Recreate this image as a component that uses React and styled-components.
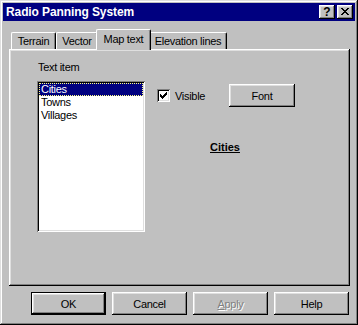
import React from 'react';
import styled, { createGlobalStyle } from 'styled-components';

const Global = createGlobalStyle`
  html, body { margin: 0; padding: 0; background: #c0c0c0; }
  body { font-family: "Liberation Sans", Arial, sans-serif; font-size: 11px; color: #000; letter-spacing: -0.3px; }
  * { box-sizing: border-box; }
`;

const Window = styled.div`
  width: 358px;
  height: 325px;
  padding: 3px;
  background: #c0c0c0;
  box-shadow: inset -1px -1px #000, inset 1px 1px #dfdfdf, inset -2px -2px #808080, inset 2px 2px #fff;
  display: flex;
  flex-direction: column;
`;

const TitleBar = styled.div`
  height: 18px;
  background: #000080;
  color: #fff;
  display: flex;
  align-items: center;
  padding: 0 2px 0 3px;
  gap: 2px;
`;

const Title = styled.div`
  flex: 1;
  font-weight: bold;
  font-size: 12px;
  letter-spacing: -0.1px;
`;

const TitleButton = styled.div`
  width: 16px;
  height: 14px;
  background: #c0c0c0;
  box-shadow: inset -1px -1px #000, inset 1px 1px #fff, inset -2px -2px #808080, inset 2px 2px #dfdfdf;
  color: #000;
  display: flex;
  align-items: center;
  justify-content: center;
  font-weight: bold;
  font-size: 12px;
  line-height: 1;
  padding-bottom: 1px;
  letter-spacing: 0;
`;

const Body = styled.div`
  padding: 8px 0 0 6px;
  display: flex;
  flex-direction: column;
`;

const TabRow = styled.div`
  display: flex;
  align-items: flex-end;
  height: 20px;
  margin-left: 2px;
  position: relative;
  z-index: 1;
`;

const Tab = styled.div`
  width: ${p => p.$w}px;
  height: ${p => (p.$active ? 21 : 17)}px;
  margin: 0 ${p => (p.$active ? -2 : 0)}px ${p => (p.$active ? -1 : 0)}px;
  padding-bottom: ${p => (p.$active ? 2 : 0)}px;
  background: #c0c0c0;
  border-top: 1px solid #fff;
  border-left: 1px solid #fff;
  border-right: 1px solid #000;
  border-radius: 2px 2px 0 0;
  box-shadow: inset -1px 0 #808080;
  display: flex;
  align-items: center;
  justify-content: center;
  white-space: nowrap;
  position: relative;
  z-index: ${p => (p.$active ? 2 : 0)};
`;

const Panel = styled.div`
  width: 341px;
  height: 237px;
  background: #c0c0c0;
  box-shadow: inset -1px -1px #000, inset 1px 1px #fff, inset -2px -2px #808080, inset 2px 2px #dfdfdf;
  padding: 12px 0 0 28px;
  display: flex;
  gap: 12px;
`;

const LeftCol = styled.div`
  display: flex;
  flex-direction: column;
`;

const Label = styled.div`
  line-height: 13px;
  padding-left: 1px;
  margin-bottom: 7px;
`;

const ListBox = styled.div`
  width: 108px;
  height: 151px;
  background: #fff;
  box-shadow: inset 1px 1px #808080, inset -1px -1px #fff, inset 2px 2px #000, inset -2px -2px #dfdfdf;
  padding: 2px;
`;

const ListItem = styled.div`
  height: 13px;
  line-height: 13px;
  padding-left: 2px;
  background: ${p => (p.$selected ? '#000080' : 'transparent')};
  color: ${p => (p.$selected ? '#fff' : '#000')};
  outline: ${p => (p.$selected ? '1px dotted #ffff80' : 'none')};
  outline-offset: -1px;
`;

const RightCol = styled.div`
  display: flex;
  flex-direction: column;
  padding-top: 23px;
`;

const OptionRow = styled.div`
  display: flex;
  align-items: center;
  height: 23px;
`;

const CheckLabel = styled.label`
  width: 72px;
  display: flex;
  align-items: center;
  gap: 5px;
`;

const CheckBox = styled.span`
  width: 13px;
  height: 13px;
  background: #fff;
  box-shadow: inset 1px 1px #808080, inset -1px -1px #fff, inset 2px 2px #000, inset -2px -2px #dfdfdf;
  display: flex;
  align-items: center;
  justify-content: center;
`;

const Button = styled.button`
  width: ${p => p.$w || 75}px;
  height: 23px;
  padding: 0;
  margin: 0;
  font: inherit;
  font-size: 11px;
  letter-spacing: -0.3px;
  color: ${p => (p.disabled ? '#808080' : '#000')};
  text-shadow: ${p => (p.disabled ? '1px 1px #fff' : 'none')};
  background: #c0c0c0;
  border: ${p => (p.$default ? '1px solid #000' : 'none')};
  box-shadow: inset -1px -1px #000, inset 1px 1px #fff, inset -2px -2px #808080, inset 2px 2px #dfdfdf;
  display: flex;
  align-items: center;
  justify-content: center;
`;

const Preview = styled.div`
  margin: 34px 0 0 53px;
  font-weight: bold;
  text-decoration: underline;
  line-height: 13px;
  letter-spacing: 0;
`;

const ButtonRow = styled.div`
  display: flex;
  gap: 6px;
  margin-top: 6px;
  padding-left: 22px;
`;

const Check = () => (
  <svg width="7" height="7" viewBox="0 0 7 7" shapeRendering="crispEdges">
    <path d="M6 0h1v3h-1v1h-1v1h-1v1h-1v1h-1v-1h-1v-1h-1v-3h1v1h1v1h1v-1h1v-1h1z" fill="#000" />
  </svg>
);

const CloseGlyph = () => (
  <svg width="8" height="7" viewBox="0 0 8 7" shapeRendering="crispEdges">
    <path d="M0 0h2v1h1v1h2v-1h1v-1h2v1h-1v1h-1v1h-1v1h1v1h1v1h1v1h-2v-1h-1v-1h-2v1h-1v1h-2v-1h1v-1h1v-1h1v-1h-1v-1h-1v-1h-1z" fill="#000" />
  </svg>
);

export default function App() {
  const tabs = [
    { label: 'Terrain', w: 45 },
    { label: 'Vector', w: 42 },
    { label: 'Map text', w: 55, active: true },
    { label: 'Elevation lines', w: 78 },
  ];
  return (
    <>
      <Global />
      <Window>
        <TitleBar>
          <Title>Radio Panning System</Title>
          <TitleButton>?</TitleButton>
          <TitleButton><CloseGlyph /></TitleButton>
        </TitleBar>
        <Body>
          <TabRow>
            {tabs.map(t => (
              <Tab key={t.label} $w={t.w} $active={t.active}>{t.label}</Tab>
            ))}
          </TabRow>
          <Panel>
            <LeftCol>
              <Label>Text item</Label>
              <ListBox>
                <ListItem $selected>Cities</ListItem>
                <ListItem>Towns</ListItem>
                <ListItem>Villages</ListItem>
              </ListBox>
            </LeftCol>
            <RightCol>
              <OptionRow>
                <CheckLabel>
                  <CheckBox><Check /></CheckBox>
                  Visible
                </CheckLabel>
                <Button $w={66}>Font</Button>
              </OptionRow>
              <Preview>Cities</Preview>
            </RightCol>
          </Panel>
          <ButtonRow>
            <Button $default>OK</Button>
            <Button>Cancel</Button>
            <Button disabled><u>A</u>pply</Button>
            <Button>Help</Button>
          </ButtonRow>
        </Body>
      </Window>
    </>
  );
}
